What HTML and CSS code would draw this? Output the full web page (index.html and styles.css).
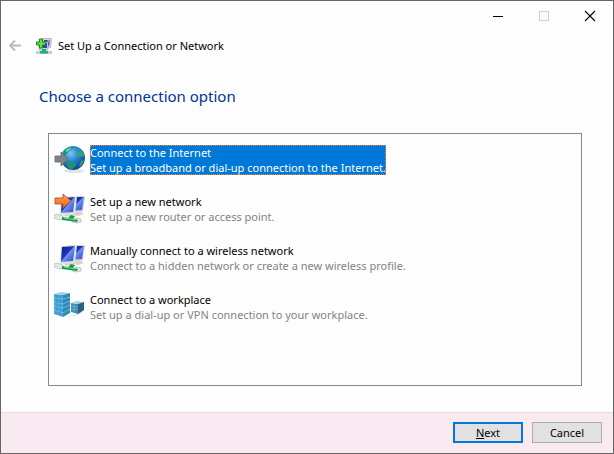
FILE: index.html
```html
<!DOCTYPE html>
<html lang="en">
<head>
<meta charset="utf-8">
<meta name="viewport" content="width=device-width, initial-scale=1">
<title>Set Up a Connection or Network</title>
<link rel="stylesheet" href="styles.css">
</head>
<body>
<svg class="defs" width="0" height="0" aria-hidden="true">
  <defs>
    <linearGradient id="screen" x1="0" y1="0" x2="1" y2="1">
      <stop offset="0" stop-color="#0d1c8e"/><stop offset=".45" stop-color="#1a35c0"/><stop offset=".5" stop-color="#6c90ee"/><stop offset="1" stop-color="#2344cf"/>
    </linearGradient>
    <linearGradient id="arrow" x1="0" y1="0" x2="0" y2="1">
      <stop offset="0" stop-color="#ffa25c"/><stop offset="1" stop-color="#e8681c"/>
    </linearGradient>
    <radialGradient id="ocean" cx=".4" cy=".3" r=".75">
      <stop offset="0" stop-color="#7cc8f4"/><stop offset=".45" stop-color="#2584cf"/><stop offset="1" stop-color="#0b3f88"/>
    </radialGradient>
    <g id="computers">
      <path d="M20 19l5-1 5 3-6 2-5-1z" fill="#d4d4ce"/>
      <path d="M15 3h16v1l-2 15-13 1z" fill="#dcdad1"/>
      <path d="M16 4h14l-2 13-12 1z" fill="url(#screen)"/>
      <path d="M8 20l7-1 5 3-8 2z" fill="#d4d4ce"/>
      <path d="M7 4l15-1 1 1-2 17-15 1z" fill="#e3e1d9"/>
      <path d="M8 5l13-1-2 15-12 1z" fill="url(#screen)"/>
      <path d="M0 22l3-1 6 2v3l-3 1-6-2zM22 25l5 1v3l-4 1-5-1v-2z" fill="#e3e7e5" stroke="#b3bab6" stroke-width=".7"/>
      <path d="M8 24l6 1 3-3 4 1-2 3 5 1-1 2-7-1-8-1z" fill="#119c45"/>
      <path d="M10 25l7 1 4 1" fill="none" stroke="#6bda86" stroke-width="1"/>
    </g>
  </defs>
</svg>
<main class="window">
  <div class="titlebar">
    <button class="caption" aria-label="Minimize"><svg width="12" height="12" shape-rendering="crispEdges"><path d="M1 6.5h10" stroke="#000"/></svg></button>
    <button class="caption" aria-label="Maximize" disabled><svg width="12" height="12" shape-rendering="crispEdges"><path d="M1.500 1.500h9v9h-9z" fill="none" stroke="#d2d2d2"/></svg></button>
    <button class="caption" aria-label="Close"><svg width="12" height="12"><path d="M1 1l10 10M11 1L1 11" stroke="#000" stroke-width="1.100"/></svg></button>
  </div>
  <header class="header">
    <button class="back" aria-label="Back" disabled><svg width="14" height="14"><path d="M13 6.500H2M7 1.500l-5 5 5 5" fill="none" stroke="#b9b9b9" stroke-width="1.800"/></svg></button>
    <svg class="app-icon" width="16" height="16" aria-hidden="true">
      <path d="M6 .500h9.500l-1 9H7z" fill="#d5d6d1" stroke="#a9aba8" stroke-width=".7"/>
      <path d="M8 2h6l-1 6H8z" fill="#2739bf"/><path d="M11 2h3l-.500 4z" fill="#8b97e4"/>
      <path d="M3 4h9v8H3z" fill="#d2d4d0" stroke="#9fa5a5" stroke-width=".7"/>
      <path d="M5 5h6v5H5z" fill="#3040c7"/>
      <path d="M0 13h16v3H0z" fill="#c5cfcc"/><path d="M6 11h4v2h2v2.500H4V13h2z" fill="#13b574"/>
      <path d="M3.500 1h3v3h3v3h-3v3h-3V7h-3V4h3z" fill="#6ddc39" stroke="#178b17"/>
    </svg>
    <span>Set Up a Connection or Network</span>
  </header>
  <section class="content">
    <h1 id="prompt">Choose a connection option</h1>
    <div class="options" role="listbox" aria-labelledby="prompt">
      <button class="option selected" role="option" aria-selected="true">
        <svg width="32" height="32" aria-hidden="true">
          <ellipse cx="20" cy="27" rx="10" ry="2" fill="#dfe4e8"/>
          <circle cx="19" cy="14" r="12" fill="url(#ocean)"/>
          <path d="M10 7c3-4 7-4 10-4-1 3-4 2-5 5-3 0-2 4-6 4zM12 19c3-3 7-2 10 1 0 3-3 3-4 6-3-1-5-3-6-7z" fill="#23926f"/>
          <path d="M24 4c4 2 6 5 6 9l-3-1-2 2-2-4 2-3zM27 17l3-1c-1 4-3 6-5 7z" fill="#35a276"/>
          <path d="M12 6c2-2 4-2 6-2-2 1-3 4-6 4z" fill="#77cfaa"/>
          <path d="M1 12h6V8l7 7-7 7v-4H1z" fill="#7d8388" stroke="#626a70" stroke-width=".8"/>
        </svg>
        <span class="text"><span class="name">Connect to the Internet</span><span class="detail">Set up a broadband or dial-up connection to the Internet.</span></span>
      </button>
      <button class="option" role="option" aria-selected="false">
        <svg width="32" height="32" aria-hidden="true">
          <use href="#computers"/>
          <path d="M1 5h8V1l8 7-8 7v-4H1z" fill="url(#arrow)" stroke="#bd5516" stroke-width=".9"/>
        </svg>
        <span class="text"><span class="name">Set up a new network</span><span class="detail">Set up a new router or access point.</span></span>
      </button>
      <button class="option" role="option" aria-selected="false">
        <svg width="32" height="32" aria-hidden="true"><use href="#computers"/></svg>
        <span class="text"><span class="name">Manually connect to a wireless network</span><span class="detail">Connect to a hidden network or create a new wireless profile.</span></span>
      </button>
      <button class="option" role="option" aria-selected="false">
        <svg width="32" height="32" aria-hidden="true">
          <path d="M16 25l6-3 8-2-5 4-13 3z" fill="#e6eaec"/>
          <path d="M0 3l9 1v22l-9-3z" fill="#42a5d6"/>
          <path d="M0 3l7-2 9 1-7 2z" fill="#9ad5ec"/>
          <path d="M9 4l7-2v20l-7 4z" fill="#2f88b8"/>
          <path d="M0 7l9 1 7-2M0 11l9 2 7-3M0 15l9 2 7-3M0 19l9 3 7-4" fill="none" stroke="#8fd0ea" stroke-width=".7"/>
          <path d="M3 4v19M6 4v21M12 4v20" stroke="#2f8dbd" stroke-width=".6"/>
          <path d="M17 12l7 1v10l-7-2z" fill="#3a8db5"/>
          <path d="M17 12l6-2 7 1-6 2z" fill="#a6d4e3"/>
          <path d="M24 13l6-2v8l-6 4z" fill="#2a617f"/>
          <path d="M17 15l7 1M17 18l7 1M20 13v9" stroke="#79b8d2" stroke-width=".7"/>
        </svg>
        <span class="text"><span class="name">Connect to a workplace</span><span class="detail">Set up a dial-up or VPN connection to your workplace.</span></span>
      </button>
    </div>
  </section>
  <footer class="footer">
    <button class="push primary" accesskey="n"><u>N</u>ext</button>
    <button class="push">Cancel</button>
  </footer>
</main>
</body>
</html>
```

FILE: styles.css
```css
* { box-sizing: border-box; }

body {
  margin: 0;
  font: 11px/15px "Noto Sans", "Open Sans", sans-serif;
  color: #000;
}

button {
  margin: 0;
  padding: 0;
  border: 0;
  background: none;
  color: inherit;
  font: inherit;
}

svg { display: block; flex: none; }
.defs { position: absolute; }

.window {
  display: flex;
  flex-direction: column;
  min-height: 100vh;
  border: 1px solid #666;
  background: #fdfdfd;
}

.titlebar {
  display: flex;
  justify-content: flex-end;
  height: 29px;
}

.caption {
  display: grid;
  place-items: center;
  width: 46px;
}

.header {
  display: flex;
  align-items: center;
  height: 31px;
  padding-left: 7px;
}

.app-icon { margin: 0 6px 0 14px; }

.content {
  display: flex;
  flex: 1;
  flex-direction: column;
  padding: 24px 31px 26px 38px;
}

h1 {
  margin: 0 0 26px;
  color: #003399;
  font-size: 15px;
  font-weight: 400;
  line-height: 22px;
}

.options {
  display: flex;
  flex: 1;
  flex-direction: column;
  align-items: flex-start;
  gap: 17px;
  margin-left: 9px;
  padding: 10px 5px;
  border: 1px solid #828790;
}

.option {
  display: flex;
  align-items: center;
  gap: 4px;
  text-align: left;
}

.name, .detail { display: block; }
.detail { color: #838383; }

.selected .text {
  outline: 1px dotted #ff8728;
  outline-offset: -1px;
  background: #0078d7;
  color: #fff;
}

.selected .detail { color: #fff; }

.footer {
  display: flex;
  justify-content: flex-end;
  gap: 9px;
  padding: 9px 11px 10px;
  border-top: 1px solid #dfdfdf;
  background: #f9eaf1;
}

.push {
  width: 70px;
  height: 21px;
  border: 1px solid #adadad;
  background: #e1e1e1;
}

.primary { border: 2px solid #0078d7; }
```
